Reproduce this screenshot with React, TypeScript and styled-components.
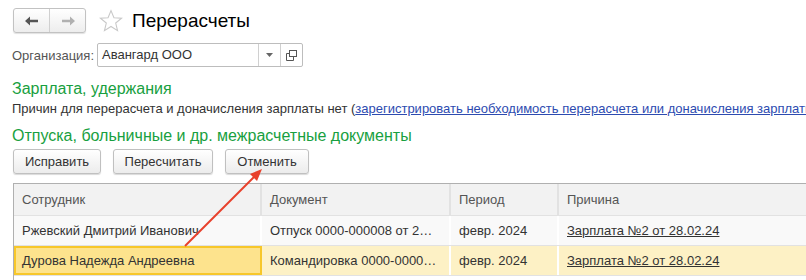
import styled, { createGlobalStyle } from "styled-components";

const GlobalStyle = createGlobalStyle`
  html, body {
    margin: 0;
    padding: 0;
    background: #fff;
    overflow: hidden;
  }
  body {
    font-family: "Liberation Sans", Arial, sans-serif;
    font-size: 13px;
    color: #4d4d4d;
  }
`;

const Page = styled.div`
  position: relative;
  width: 806px;
  height: 280px;
  overflow: hidden;
  padding: 8px 0 0 12px;
  box-sizing: border-box;
`;

const TopBar = styled.div`
  display: flex;
  align-items: center;
  height: 25px;
`;

const NavGroup = styled.div`
  display: flex;
  margin-left: 1px;
  height: 25px;
  border: 1px solid #c2c2c2;
  border-radius: 3px;
  box-sizing: border-box;
  background: linear-gradient(#ffffff, #ededed);
  box-shadow: 0 1px 1px rgba(0, 0, 0, 0.12);
`;

const NavButton = styled.div<{ $dim?: boolean; $first?: boolean }>`
  width: 35px;
  display: flex;
  align-items: center;
  justify-content: center;
  border-right: ${(p) => (p.$first ? "1px solid #d0d0d0" : "none")};
  color: ${(p) => (p.$dim ? "#b0b0b0" : "#555")};
`;

const Star = styled.div`
  margin-left: 13px;
  width: 24px;
  height: 24px;
  display: flex;
`;

const Title = styled.h1`
  margin: 0 0 0 9px;
  font-size: 19px;
  font-weight: normal;
  color: #000;
  line-height: 25px;
`;

const FieldRow = styled.div`
  display: flex;
  align-items: center;
  margin-top: 10px;
  height: 24px;
`;

const Label = styled.span`
  width: 85px;
  color: #555;
`;

const Input = styled.div`
  display: flex;
  height: 24px;
  border: 1px solid #bdbdbd;
  border-radius: 2px;
  box-sizing: border-box;
`;

const InputText = styled.div`
  width: 160px;
  padding-left: 4px;
  line-height: 22px;
  color: #333;
  box-sizing: border-box;
`;

const InputButton = styled.div`
  width: 21px;
  border-left: 1px solid #d0d0d0;
  display: flex;
  align-items: center;
  justify-content: center;
`;

const SectionTitle = styled.div<{ $top: number }>`
  margin-top: ${(p) => p.$top}px;
  font-size: 16px;
  line-height: 18px;
  color: #18a040;
  white-space: nowrap;
`;

const InfoLine = styled.div`
  margin-top: 2px;
  line-height: 18px;
  color: #333;
  white-space: nowrap;
`;

const Link = styled.a`
  color: #2d4bb0;
  text-decoration: underline;
`;

const ButtonRow = styled.div`
  display: flex;
  gap: 12px;
  margin-top: 4px;
  margin-left: 1px;
`;

const Button = styled.div<{ $w: number }>`
  width: ${(p) => p.$w}px;
  height: 25px;
  box-sizing: border-box;
  border: 1px solid #c0c0c0;
  border-radius: 3px;
  background: linear-gradient(#ffffff, #ececec);
  box-shadow: 0 1px 1px rgba(0, 0, 0, 0.15);
  display: flex;
  align-items: center;
  justify-content: center;
  color: #333;
`;

const Table = styled.div`
  margin-top: 9px;
  margin-left: 1px;
  width: 900px;
  border-top: 1px solid #b0b0b0;
  border-left: 1px solid #b0b0b0;
`;

const Row = styled.div<{ $bg: string; $h: number }>`
  display: grid;
  grid-template-columns: 248px 189px 108px 1fr;
  height: ${(p) => p.$h}px;
  background: ${(p) => p.$bg};
  border-bottom: 1px solid #e2e2e2;
`;

const Cell = styled.div<{ $sel?: boolean; $head?: boolean }>`
  display: flex;
  align-items: center;
  min-width: 0;
  padding-left: ${(p) => (p.$sel ? "6px" : "8px")};
  white-space: nowrap;
  overflow: hidden;
  box-sizing: border-box;
  color: ${(p) => (p.$head ? "#555" : "#333")};
  border-right: ${(p) => (p.$head ? "2px solid #e2e2e2" : "2px solid #fff")};
  ${(p) =>
    p.$sel &&
    `
    background: #fde38d;
    border: 2px solid #f7c72a;
  `}
`;

const Ellipsis = styled.span`
  display: block;
  min-width: 0;
  overflow: hidden;
  text-overflow: ellipsis;
  padding-right: 10px;
`;

const Reason = styled.span`
  text-decoration: underline;
  color: #333;
`;

const Arrow = styled.svg`
  position: absolute;
  left: 0;
  top: 0;
  pointer-events: none;
`;

const rows = [
  {
    name: "Ржевский Дмитрий Иванович",
    doc: "Отпуск 0000-000008 от 28.02.2024",
    bg: "#f9f9f9",
    sel: false,
  },
  {
    name: "Дурова Надежда Андреевна",
    doc: "Командировка 0000-000001 от 28.02.2024",
    bg: "#fdf1c5",
    sel: true,
  },
];

export default function App() {
  return (
    <Page>
      <GlobalStyle />
      <TopBar>
        <NavGroup>
          <NavButton $first>
            <svg width="14" height="10" viewBox="0 0 14 10">
              <path d="M0 5 L5 0.5 V3.8 H13 V6.2 H5 V9.5 Z" fill="currentColor" />
            </svg>
          </NavButton>
          <NavButton $dim>
            <svg width="14" height="10" viewBox="0 0 14 10">
              <path d="M14 5 L9 0.5 V3.8 H1 V6.2 H9 V9.5 Z" fill="currentColor" />
            </svg>
          </NavButton>
        </NavGroup>
        <Star>
          <svg width="24" height="24" viewBox="0 0 22 22">
            <path
              d="M11 1.5 L13.7 8 L20.7 8.4 L15.3 12.9 L17 19.8 L11 16 L5 19.8 L6.7 12.9 L1.3 8.4 L8.3 8 Z"
              fill="none"
              stroke="#c8c8c8"
              strokeWidth="1"
            />
          </svg>
        </Star>
        <Title>Перерасчеты</Title>
      </TopBar>

      <FieldRow>
        <Label>Организация:</Label>
        <Input>
          <InputText>Авангард ООО</InputText>
          <InputButton>
            <svg width="7" height="4" viewBox="0 0 7 4">
              <path d="M0 0 H7 L3.5 4 Z" fill="#666" />
            </svg>
          </InputButton>
          <InputButton>
            <svg width="11" height="11" viewBox="0 0 11 11">
              <rect x="3.5" y="0.5" width="7" height="6" fill="none" stroke="#555" />
              <path d="M3.5 3.5 H0.5 V10.5 H7.5 V6.5" fill="none" stroke="#555" />
            </svg>
          </InputButton>
        </Input>
      </FieldRow>

      <SectionTitle $top={13}>Зарплата, удержания</SectionTitle>
      <InfoLine>
        Причин для перерасчета и доначисления зарплаты нет (
        <Link>зарегистрировать необходимость перерасчета или доначисления зарплаты</Link>)
      </InfoLine>
      <SectionTitle $top={9}>Отпуска, больничные и др. межрасчетные документы</SectionTitle>

      <ButtonRow>
        <Button $w={88}>Исправить</Button>
        <Button $w={100}>Пересчитать</Button>
        <Button $w={84}>Отменить</Button>
      </ButtonRow>

      <Table>
        <Row $bg="#f2f2f2" $h={31}>
          <Cell $head>Сотрудник</Cell>
          <Cell $head>Документ</Cell>
          <Cell $head>Период</Cell>
          <Cell $head>Причина</Cell>
        </Row>
        {rows.map((r) => (
          <Row key={r.name} $bg={r.bg} $h={29}>
            <Cell $sel={r.sel}>{r.name}</Cell>
            <Cell>
              <Ellipsis>{r.doc}</Ellipsis>
            </Cell>
            <Cell>февр. 2024</Cell>
            <Cell>
              <Reason>Зарплата №2 от 28.02.24</Reason>
            </Cell>
          </Row>
        ))}
        <Row $bg="#fff" $h={29}>
          <Cell />
          <Cell />
          <Cell />
          <Cell />
        </Row>
      </Table>

      <Arrow width="806" height="280">
        <line x1="185" y1="246" x2="255" y2="176" stroke="#e8412c" strokeWidth="2" />
        <polygon points="262,169 250,174 257,181" fill="#e8412c" />
      </Arrow>
    </Page>
  );
}
